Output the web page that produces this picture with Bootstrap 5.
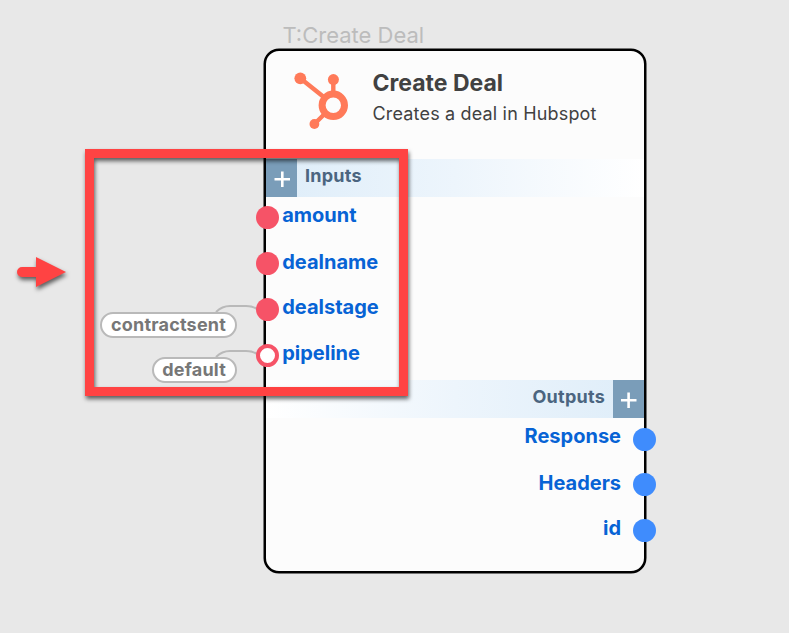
<!DOCTYPE html>
<html lang="en">
<head>
<meta charset="utf-8">
<meta name="viewport" content="width=device-width, initial-scale=1">
<title>Create Deal</title>
<link href="https://cdn.jsdelivr.net/npm/bootstrap@5.3.0/dist/css/bootstrap.min.css" rel="stylesheet">
<style>
body{background:#e8e8e8;font-family:Inter,"Liberation Sans",sans-serif;line-height:1}
.canvas{width:789px;height:633px}
.node-tag{left:282.5px;top:22px;font-size:22px;line-height:26px;color:#bcbcbc}
.node{left:264px;top:49px;width:382px;height:524px;background:#fcfcfc;border:2px solid #000;border-radius:15px;box-shadow:0 0 0 .5px #000}
.node-head{height:108px;padding:19px 0 0 28px}
.node-copy{padding-left:22.5px;margin-top:-1px}
.node-title{font-size:23px;line-height:28px;font-weight:700;color:#414141}
.node-sub{font-size:18px;line-height:22px;color:#414141;margin-top:6px;letter-spacing:.17px}
.band{height:38px;color:#4b6580;font-size:18px;font-weight:700;line-height:34px;letter-spacing:.25px}
.band-in{background:linear-gradient(90deg,#deedf9,#edf5fc 50%,#fff)}
.band-out{background:linear-gradient(270deg,#deedf9,#edf5fc 50%,#fff);margin-top:2px}
.add{width:31px;background:#7a9db9}
.ports-in{margin-top:-3px}
.ports-out{margin-top:-2px}
.port{height:46px;font-size:20px;font-weight:700;line-height:42px;color:#0763d5}
.ports-in .port{padding-left:16.2px}
.ports-out .port{height:45.7px;padding-right:23px}
.ports-out .port:first-child{line-height:41px}
.ports-in .port:nth-child(2){line-height:44px}
.dot{width:23px;height:23px;top:11.5px}
.ports-in .dot{left:-10px;background:#f65367}
.ports-out .dot{right:-12px;background:#3f8cfd}
.ports-in .dot-open{background:#fff;border:4px solid #f65367}
.pill{margin-right:29.5px;height:26px;top:25px;border:2px solid #b9b9b9;padding:0 8.5px;background:#fff;font-size:18px;line-height:22px;font-weight:700;letter-spacing:.2px;color:#777}
.pill-stage{top:26px}
.wire{left:-51px;top:17px}
.frame{left:85px;top:149px;width:323px;height:247px;border:9px solid #ff4343;filter:drop-shadow(1px 3px 2px rgba(0,0,0,.6))}
.pointer{left:12px;top:250px;filter:drop-shadow(1px 3px 2px rgba(0,0,0,.6))}
</style>
</head>
<body>
<main class="canvas position-relative overflow-hidden">
  <div class="node-tag position-absolute text-nowrap">T:Create Deal</div>
  <section class="node position-absolute">
    <header class="node-head d-flex align-items-start">
      <svg width="56" height="60" viewBox="0 0 56 60" fill="none" stroke="#ff7a59">
        <path d="M6 8 31 28M39.3 10V26M20.4 54 31 43.5" stroke-width="4.4"/>
        <circle cx="39.3" cy="35.3" r="11.2" stroke-width="7"/>
        <g fill="#ff7a59" stroke="none"><circle cx="6.3" cy="8.3" r="5.9"/><circle cx="39.4" cy="9.6" r="5.5"/><circle cx="20.4" cy="54" r="4.9"/></g>
      </svg>
      <div class="node-copy text-nowrap">
        <h1 class="node-title mb-0">Create Deal</h1>
        <p class="node-sub mb-0">Creates a deal in Hubspot</p>
      </div>
    </header>
    <div class="band band-in d-flex">
      <span class="add d-flex"><svg width="31" height="38" stroke="#fff" stroke-width="2.6"><path d="M8.500 20.300H24M16.300 12.500V28"/></svg></span>
      <span class="ps-2">Inputs</span>
    </div>
    <div class="ports-in">
      <div class="port position-relative"><i class="dot rounded-circle position-absolute"></i><span>amount</span></div>
      <div class="port position-relative"><i class="dot rounded-circle position-absolute"></i><span>dealname</span></div>
      <div class="port position-relative">
        <svg class="wire position-absolute" width="50" height="20" fill="none" stroke="#b9b9b9" stroke-width="2"><path d="M1 9Q7 3 15 3H31Q38 3 42 6"/></svg>
        <span class="pill pill-stage rounded-pill position-absolute end-100 text-nowrap">contractsent</span>
        <i class="dot rounded-circle position-absolute"></i><span>dealstage</span>
      </div>
      <div class="port position-relative">
        <svg class="wire position-absolute" width="50" height="20" fill="none" stroke="#b9b9b9" stroke-width="2"><path d="M1 8Q7 2 15 2H31Q38 2 42 5"/></svg>
        <span class="pill rounded-pill position-absolute end-100 text-nowrap">default</span>
        <i class="dot dot-open rounded-circle position-absolute"></i><span>pipeline</span>
      </div>
    </div>
    <div class="band band-out d-flex justify-content-end">
      <span class="pe-2">Outputs</span>
      <span class="add d-flex"><svg width="31" height="38" stroke="#fff" stroke-width="2.6"><path d="M8 20.300H23.500M15.600 12.500V28"/></svg></span>
    </div>
    <div class="ports-out text-end">
      <div class="port position-relative"><span>Response</span><i class="dot rounded-circle position-absolute"></i></div>
      <div class="port position-relative"><span>Headers</span><i class="dot rounded-circle position-absolute"></i></div>
      <div class="port position-relative"><span>id</span><i class="dot rounded-circle position-absolute"></i></div>
    </div>
  </section>
  <div class="frame position-absolute"></div>
  <svg class="pointer position-absolute" width="60" height="45" fill="#ff4343"><path d="M24 17H10a5 5 0 0 0 0 10H24V37L54 22 24 7Z"/></svg>
</main>
<script src="https://cdn.jsdelivr.net/npm/bootstrap@5.3.0/dist/js/bootstrap.bundle.min.js"></script>
</body>
</html>
